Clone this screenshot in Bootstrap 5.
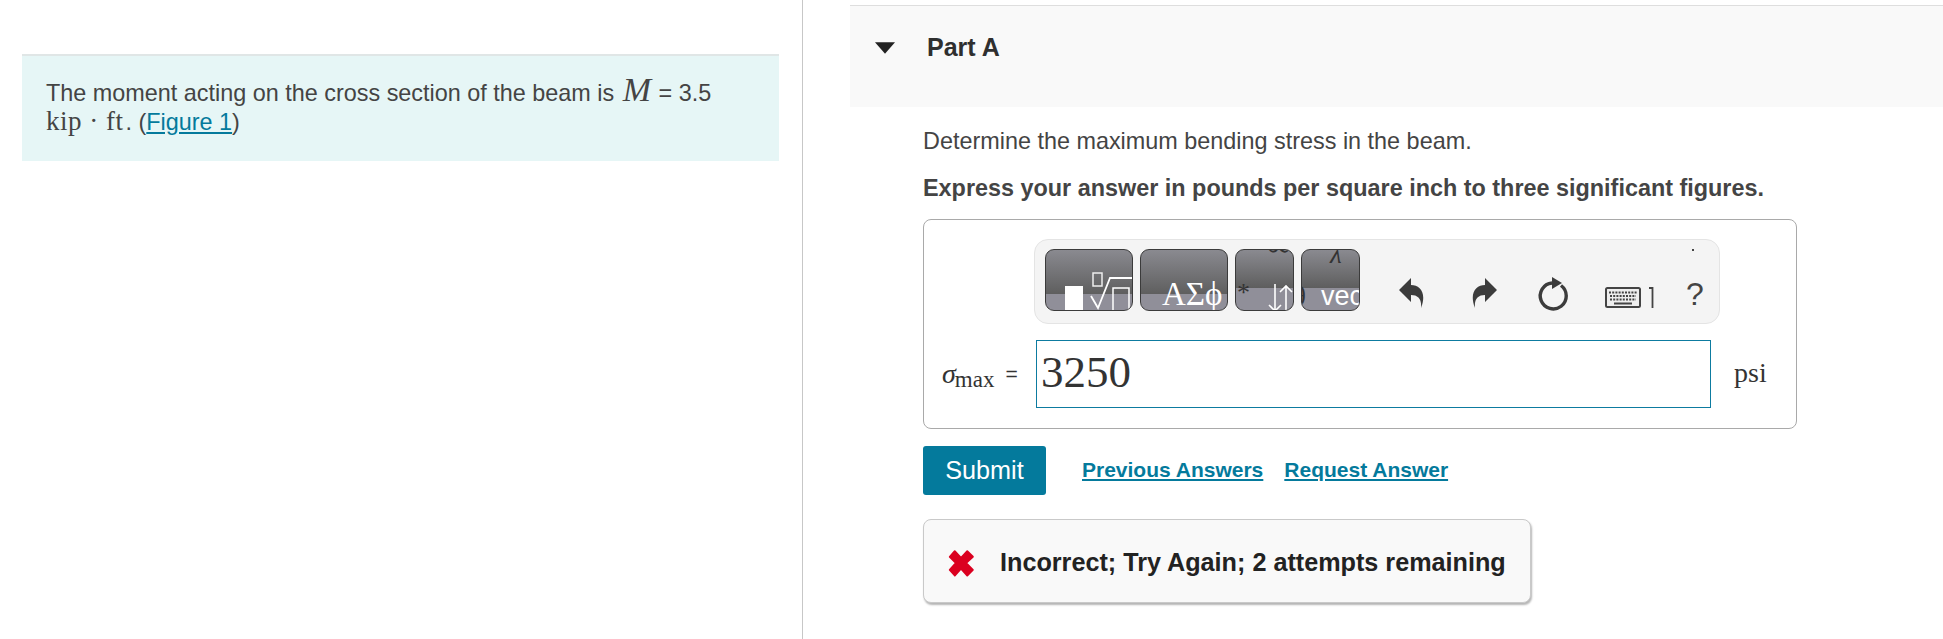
<!DOCTYPE html>
<html lang="en">
<head>
    <meta charset="UTF-8">
    <title>Part A</title>
    <link href="https://cdn.jsdelivr.net/npm/bootstrap@5.3.0/dist/css/bootstrap.min.css" rel="stylesheet">
    <style>
        body {
            font-family: "Liberation Sans", Arial, sans-serif;
            color: #444;
            background: #fff;
            overflow: hidden;
        }
        a { color: #047a9c; }
        .page-wrap { height: 639px; }
        .left-pane {
            width: 803px;
            flex: none;
            border-right: 1px solid #c7c7c7;
            padding: 54px 23px 0 22px;
        }
        .intro-box {
            background: #e6f6f6;
            border-top: 2px solid #e0e6e6;
            height: 107px;
            padding: 23px 24px;
            font-size: 23.4px;
            line-height: 28px;
        }
        .math { font-family: "Liberation Serif", "Times New Roman", serif; }
        .math-big { font-size: 34px; line-height: 20px; font-style: italic; letter-spacing: 1px; margin-left: 2px; }
        .math-med { font-size: 27px; letter-spacing: .5px; margin-right: 2px; }
        .right-pane { flex: 1; padding: 5px 0 0 47px; min-width: 0; }
        .part-head {
            background: #f9f9f9;
            border-top: 1px solid #dedede;
            height: 102px;
            padding: 26px 0 0 25px;
            font-size: 25px;
            line-height: 30px;
            font-weight: 700;
            color: #2f2f2f;
            gap: 32px;
        }
        .caret-down {
            width: 20px;
            height: 12px;
            margin-top: 10px;
            flex: none;
        }
        .part-body { padding: 19px 0 0 73px; width: 947px; }
        .q-text { font-size: 23.4px; line-height: 30px; margin-bottom: 17px; }
        .q-strong { font-size: 23.4px; line-height: 30px; font-weight: 700; margin-bottom: 16px; }
        .answer-box {
            border: 1px solid #a9a9a9;
            border-radius: 8px;
            height: 210px;
            padding: 19px 0 0 18px;
        }
        .tool-bar {
            margin-left: 92px;
            width: 686px;
            height: 85px;
            background: #f4f4f4;
            border: 1px solid #e4e4e4;
            border-radius: 14px;
            padding: 9px 0 0 10px;
            position: relative;
        }
        .tool-btn {
            height: 62px;
            border: 1px solid #3b3b3b;
            border-radius: 9px;
            background: linear-gradient(#8a8a90 0, #5e5e5e 74%, #908f99 74%, #908f99 100%);
            overflow: hidden;
            flex: none;
            margin-right: 7px;
            position: relative;
            color: #fff;
        }
        .tool-btn span { position: absolute; white-space: nowrap; }
        .b-wide { width: 88px; }
        .b-narrow {
            width: 59px;
            background: linear-gradient(#8a8a90 0, #5e5e5e 63%, #908f99 63%, #908f99 100%);
        }
        .tool-glyph { position: absolute; }
        .answer-row { margin-top: 16px; height: 68px; }
        .answer-label { width: 94px; flex: none; font-size: 18px; color: #333; }
        .sigma { font-family: "Liberation Serif", serif; font-size: 28px; font-style: italic; }
        .sub-max { font-family: "Liberation Serif", serif; font-size: 23px; position: relative; top: 6px; margin-left: -1px; }
        .eq-sign { margin-left: 11px; font-size: 21px; }
        .answer-input {
            width: 675px;
            height: 68px;
            flex: none;
            border: 1px solid #0d7ba0;
            border-radius: 0;
            font-family: "Liberation Serif", serif;
            font-size: 45px;
            color: #333;
            padding: 0 4px 4px;
        }
        .unit-label { margin-left: 23px; font-size: 28px; color: #333; padding-bottom: 3px; }
        .act-row { margin-top: 17px; gap: 36px; }
        .btn-submit {
            background: #047a9c;
            color: #fff;
            border: 0;
            border-radius: 3px;
            width: 123px;
            height: 49px;
            padding: 0;
            font-size: 25.2px;
        }
        .btn-submit:hover { background: #03627e; color: #fff; }
        .act-links { font-size: 21px; font-weight: 700; gap: 21px; margin-top: -2px; }
        .act-links a { text-decoration: underline; text-decoration-thickness: 2px; text-underline-offset: 2px; line-height: 26px; }
        .feedback {
            margin-top: 24px;
            width: 608px;
            height: 84px;
            background: #f9f9f9;
            border: 1px solid #c9c9c9;
            border-radius: 8px;
            box-shadow: 1px 2px 2px #b5b5b5;
            padding: 3px 0 0 22px;
            font-size: 25.2px;
            font-weight: 700;
            color: #222;
            gap: 24px;
        }
    </style>
</head>
<body>
    <div class="d-flex page-wrap">
        <div class="left-pane">
            <div class="intro-box">
                The moment acting on the cross section of the beam is <span class="math math-big">M</span> = 3.5<br>
                <span class="math math-med">kip · ft</span>. (<a href="#">Figure 1</a>)
            </div>
        </div>

        <div class="right-pane">
            <div class="part-head d-flex">
                <svg class="caret-down" viewBox="0 0 19 11"><path d="M0 0H19L9.5 11Z" fill="#222"/></svg>
                <div>Part A</div>
            </div>
            <div class="part-body">
                <p class="q-text">Determine the maximum bending stress in the beam.</p>
                <p class="q-strong">Express your answer in pounds per square inch to three significant figures.</p>

                <div class="answer-box">
                    <div class="tool-bar d-flex">
                        <div class="tool-btn b-wide">
                            <span class="tool-glyph" style="left:19px;top:36px;width:18px;height:26px;background:#fff"></span>
                            <svg class="tool-glyph" style="left:44px;top:12px" width="44" height="50" viewBox="0 0 44 50" fill="none" stroke="#fff" stroke-width="1.5"><rect x="3" y="11" width="9" height="13" stroke="#eee"/><path d="M1 34L8 46L20 16H44" stroke-width="1.8"/><path d="M23 50V26H39V50"/></svg>
                        </div>
                        <div class="tool-btn b-wide">
                            <span class="math" style="left:21px;top:25px;font-size:33px;line-height:38px">ΑΣϕ</span>
                        </div>
                        <div class="tool-btn b-narrow">
                            <span class="math" style="left:31px;top:-24px;font-size:34px;line-height:38px;color:#333">∞</span>
                            <span class="math" style="left:1px;top:30px;font-size:26px;line-height:26px;color:#333;z-index:1">*</span>
                            <svg class="tool-glyph" style="left:31px;top:34px" width="26" height="28" viewBox="0 0 26 28" fill="none" stroke="#fff" stroke-width="1.600"><path d="M8 0V27M2 21L8 27L14 21"/><path d="M19 28V2M13 8L19 2L25 8"/></svg>
                        </div>
                        <div class="tool-btn b-narrow">
                            <span class="math" style="left:28px;top:-16px;font-size:27px;font-style:italic;color:#333">λ</span>
                            <span class="math" style="left:-9px;top:31px;font-size:27px;line-height:30px;color:#333">θ</span>
                            <span style="left:19px;top:31px;font-size:27px;line-height:30px">vec</span>
                        </div>

                        <svg class="tool-glyph" style="left:364px;top:37px" width="26" height="31" viewBox="0 0 26 31"><path d="M0 13L12 1V8C21 8 28 16 22 31C23 22 19 18 12 18V25Z" fill="#3c3c3c"/></svg>
                        <svg class="tool-glyph" style="left:436px;top:37px" width="26" height="31" viewBox="0 0 26 31"><path d="M26 13L14 1V8C5 8 -2 16 4 31C3 22 7 18 14 18V25Z" fill="#3c3c3c"/></svg>
                        <svg class="tool-glyph" style="left:501px;top:35px" width="34" height="38" viewBox="0 0 34 38" fill="none"><path d="M16 8A13 13 0 1 0 25 10.500" stroke="#3c3c3c" stroke-width="3.400"/><path d="M16 2L26 8L16 14Z" fill="#3c3c3c"/></svg>
                        <svg class="tool-glyph" style="left:570px;top:47px" width="36" height="21" viewBox="0 0 36 21" fill="none"><rect x="1" y="1" width="34" height="19" rx="1.500" fill="#eee" stroke="#444" stroke-width="2"/><path d="M4 5.500H32M5 9H31M5 12.500H31" stroke="#444" stroke-width="2" stroke-dasharray="2 1.200"/><path d="M9 16.500H27" stroke="#444" stroke-width="2"/></svg>
                        <svg class="tool-glyph" style="left:614px;top:47px" width="5" height="22" viewBox="0 0 5 22" fill="none"><path d="M0 1H3.500V21" stroke="#444" stroke-width="1.800"/></svg>
                        <span class="tool-glyph" style="left:651px;top:36px;font-size:32px;line-height:36px;color:#444">?</span>
                        <span class="tool-glyph" style="left:657px;top:9px;width:2px;height:2px;background:#444"></span>
                    </div>

                    <div class="answer-row d-flex align-items-center">
                        <div class="answer-label d-flex align-items-center">
                            <span class="sigma">σ</span><span class="sub-max">max</span><span class="eq-sign">=</span>
                        </div>
                        <input class="answer-input form-control" type="text" value="3250">
                        <span class="unit-label math">psi</span>
                    </div>
                </div>

                <div class="act-row d-flex align-items-center">
                    <button type="button" class="btn btn-submit">Submit</button>
                    <div class="act-links d-flex">
                        <a href="#">Previous Answers</a>
                        <a href="#">Request Answer</a>
                    </div>
                </div>

                <div class="feedback d-flex align-items-center">
                    <svg width="30" height="30" viewBox="0 0 24 24"><path d="M3 7L7 2.500L12 8L17 2.500L21.500 7L16 12L21.500 17.500L17 22L12 16.500L7 22L3 17.500L8 12Z" fill="#db0020" stroke="#db0020" stroke-linejoin="round" stroke-width="1.500"/></svg>
                    <div>Incorrect; Try Again; 2 attempts remaining</div>
                </div>
            </div>
        </div>
    </div>
    <script src="https://cdn.jsdelivr.net/npm/bootstrap@5.3.0/dist/js/bootstrap.bundle.min.js"></script>
</body>
</html>
